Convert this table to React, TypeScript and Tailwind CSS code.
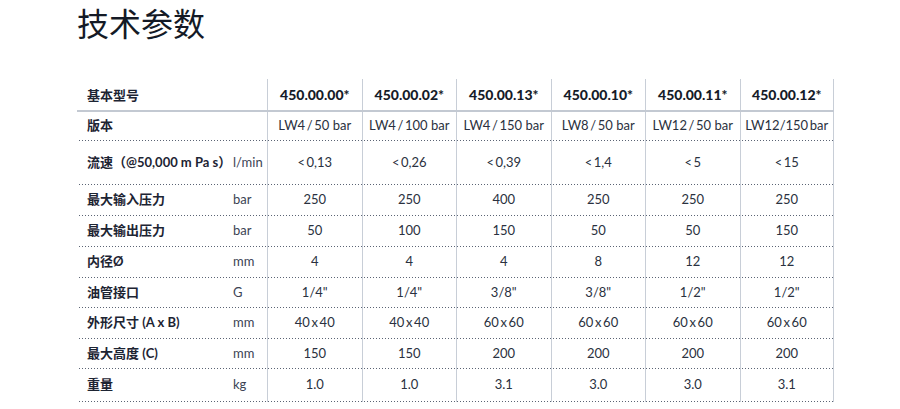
const models = ["450.00.00*", "450.00.02*", "450.00.13*", "450.00.10*", "450.00.11*", "450.00.12*"];

// thin spaces keep the values as narrow as in the print layout
const t = "\u2009";

const rows = [
  { label: "版本", unit: "", h: "h-[29px]", values: [`LW4${t}/${t}50 bar`, `LW4${t}/${t}100 bar`, `LW4${t}/${t}150 bar`, `LW8${t}/${t}50 bar`, `LW12${t}/${t}50 bar`, `LW12/150${t}bar`] },
  { label: "流速（@50,000 m Pa s）", unit: "l/min", h: "h-[44px]", values: [`<${t}0,13`, `<${t}0,26`, `<${t}0,39`, `<${t}1,4`, `<${t}5`, `<${t}15`] },
  { label: "最大输入压力", unit: "bar", h: "h-[31px]", values: ["250", "250", "400", "250", "250", "250"] },
  { label: "最大输出压力", unit: "bar", h: "h-[31px]", values: ["50", "100", "150", "50", "50", "150"] },
  { label: "内径Ø", unit: "mm", h: "h-[31px]", values: ["4", "4", "4", "8", "12", "12"] },
  { label: "油管接口", unit: "G", h: "h-[30px]", values: ["1/4\"", "1/4\"", "3/8\"", "3/8\"", "1/2\"", "1/2\""] },
  { label: "外形尺寸 (A x B)", unit: "mm", h: "h-[31px]", values: [`40${t}x${t}40`, `40${t}x${t}40`, `60${t}x${t}60`, `60${t}x${t}60`, `60${t}x${t}60`, `60${t}x${t}60`] },
  { label: "最大高度 (C)", unit: "mm", h: "h-[30px]", values: ["150", "150", "200", "200", "200", "200"] },
  { label: "重量", unit: "kg", h: "h-[33px]", values: ["1.0", "1.0", "3.1", "3.0", "3.0", "3.1"] },
];

const grid = "grid grid-cols-[146px_44px_repeat(6,1fr)]";
const dotted =
  "bg-[linear-gradient(to_right,#5b6474_1px,transparent_1px)] bg-[length:3px_1px] bg-bottom bg-repeat-x";

export default function App() {
  return (
    <div className="w-[900px] h-[409px] bg-white overflow-hidden font-['Lato','Noto_Sans_CJK_SC',sans-serif] text-[#1d2433]">
      <div className="h-[79px] pl-[77px] pt-[1px]">
        <h1 className="w-fit pr-1 text-[32px] leading-[42px] font-normal font-['Noto_Sans_CJK_SC',sans-serif] text-[#141a26]">
          技术参数
        </h1>
      </div>

      <div className="ml-[77px] w-[757px]">
        <div className={`${grid} h-[33px] border-b-2 border-[#c3c9d2]`}>
          <div className="col-span-2 flex items-center pl-[10px] text-[13px] font-bold font-['Noto_Sans_CJK_SC',sans-serif]">
            基本型号
          </div>
          {models.map((m, i) => (
            <div
              key={m}
              className={`flex items-center justify-center border-l border-[#c8ced7] text-[14px] font-black text-[#161c29] ${i === 5 ? "border-r" : ""}`}
            >
              {m}
            </div>
          ))}
        </div>

        {rows.map((r) => (
          <div key={r.label} className={`${grid} ${r.h} ${dotted}`}>
            <div className="flex items-center pl-[10px] pb-[1px] text-[13px] font-bold whitespace-nowrap">
              {r.label}
            </div>
            <div className="flex items-center pl-[10px] pb-[1px] text-[13px] text-[#3b4353]">{r.unit}</div>
            {r.values.map((v, i) => (
              <div
                key={i}
                className={`flex items-center justify-center pb-[1px] border-l border-[#c8ced7] text-[13px] text-[#2a3140] whitespace-nowrap ${i === 5 ? "border-r" : ""}`}
              >
                {v}
              </div>
            ))}
          </div>
        ))}
      </div>
    </div>
  );
}
